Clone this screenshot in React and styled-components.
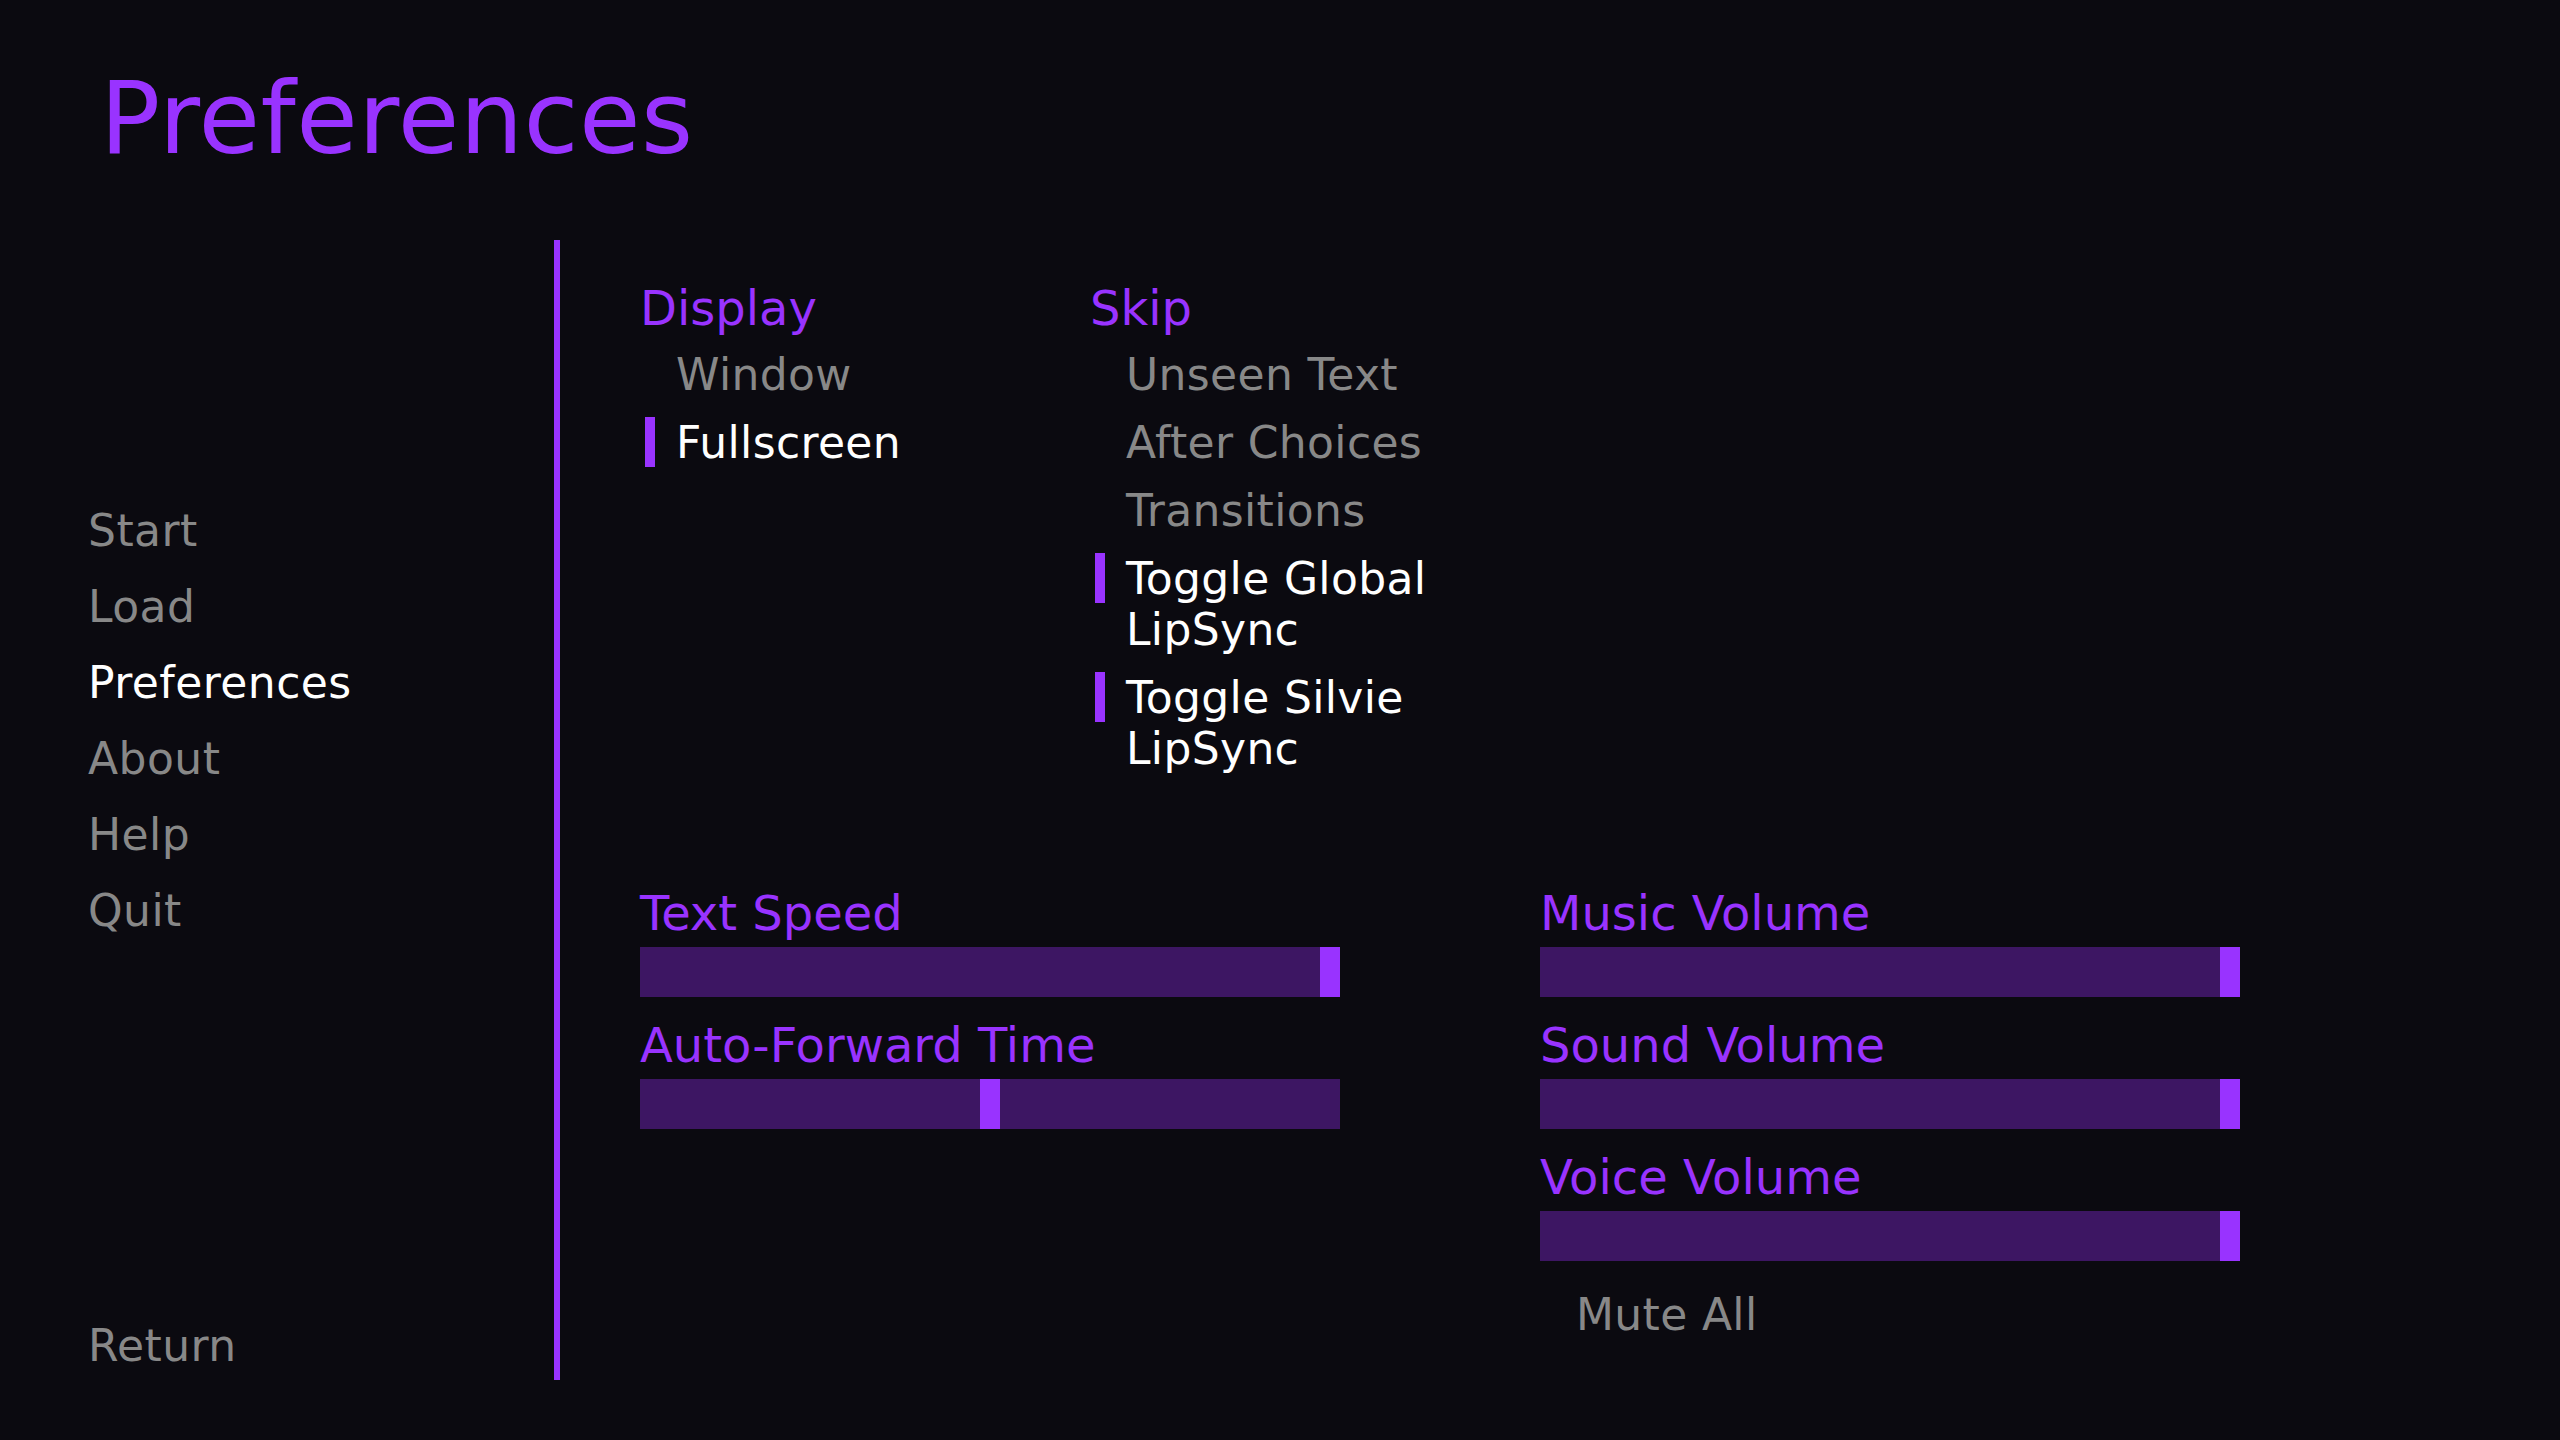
import React from 'react';
import styled, { createGlobalStyle } from 'styled-components';

const ACCENT = '#9933ff';
const MUTED = '#3d1663';
const IDLE = '#888888';

const GlobalStyle = createGlobalStyle`
  html, body {
    margin: 0;
    padding: 0;
    background: #0b0a10;
  }
  body {
    font-family: 'DejaVu Sans', 'Liberation Sans', sans-serif;
  }
`;

const Screen = styled.div`
  width: 2560px;
  height: 1440px;
  display: flex;
  flex-direction: column;
  background: #0b0a10;
  overflow: hidden;
`;

const Header = styled.header`
  height: 240px;
  box-sizing: border-box;
  padding: 61px 0 0 100px;
`;

const Title = styled.h1`
  margin: 0;
  font-size: 100px;
  line-height: 116px;
  font-weight: normal;
  letter-spacing: 0.5px;
  color: ${ACCENT};
`;

const Body = styled.div`
  display: flex;
  height: 1140px;
`;

const Navigation = styled.nav`
  width: 554px;
  box-sizing: border-box;
  padding: 253px 0 4px 88px;
  display: flex;
  flex-direction: column;
`;

const NavButton = styled.div`
  font-size: 44px;
  line-height: 76px;
  height: 76px;
  letter-spacing: 0.45px;
  color: ${(p) => (p.$selected ? '#ffffff' : IDLE)};
`;

const ReturnButton = styled(NavButton)`
  margin-top: auto;
  line-height: 60px;
  height: 60px;
`;

const Divider = styled.div`
  width: 6px;
  background: ${ACCENT};
`;

const Content = styled.main`
  flex: 1;
  box-sizing: border-box;
  padding: 40px 0 0 80px;
  display: flex;
  flex-direction: column;
`;

const Toggles = styled.div`
  display: flex;
`;

const ToggleGroup = styled.div`
  width: 450px;
  display: flex;
  flex-direction: column;
`;

const Label = styled.div`
  font-size: 48px;
  line-height: 56px;
  height: 56px;
  color: ${ACCENT};
  margin-bottom: ${(p) => p.$gap || 5}px;
`;

const CheckButton = styled.div`
  position: relative;
  box-sizing: border-box;
  padding: 8px 0 9px 36px;
  font-size: 44px;
  line-height: 51px;
  letter-spacing: 0.35px;
  max-width: 380px;
  color: ${(p) => (p.$selected ? '#ffffff' : IDLE)};

  &::before {
    content: '';
    display: ${(p) => (p.$selected ? 'block' : 'none')};
    position: absolute;
    left: 5px;
    top: 8px;
    width: 10px;
    height: 50px;
    background: ${ACCENT};
  }
`;

const Sliders = styled.div`
  margin-top: 102px;
  display: grid;
  grid-template-columns: 700px 700px;
  column-gap: 200px;
  align-items: start;
`;

const SliderColumn = styled.div`
  display: flex;
  flex-direction: column;
`;

const SliderGroup = styled.div`
  margin-bottom: 20px;
`;

const Bar = styled.div`
  position: relative;
  height: 50px;
  background: ${MUTED};
`;

const Thumb = styled.div`
  position: absolute;
  top: 0;
  width: 20px;
  height: 50px;
  background: ${ACCENT};
`;

const Slider = ({ label, value }) => (
  <SliderGroup>
    <Label $gap={6}>{label}</Label>
    <Bar>
      <Thumb style={{ left: `${value * 680}px` }} />
    </Bar>
  </SliderGroup>
);

const navItems = ['Start', 'Load', 'Preferences', 'About', 'Help', 'Quit'];

const App = () => (
  <>
    <GlobalStyle />
    <Screen>
      <Header>
        <Title>Preferences</Title>
      </Header>
      <Body>
        <Navigation>
          {navItems.map((item) => (
            <NavButton key={item} $selected={item === 'Preferences'}>
              {item}
            </NavButton>
          ))}
          <ReturnButton>Return</ReturnButton>
        </Navigation>
        <Divider />
        <Content>
          <Toggles>
            <ToggleGroup>
              <Label>Display</Label>
              <CheckButton>Window</CheckButton>
              <CheckButton $selected>Fullscreen</CheckButton>
            </ToggleGroup>
            <ToggleGroup>
              <Label>Skip</Label>
              <CheckButton>Unseen Text</CheckButton>
              <CheckButton>After Choices</CheckButton>
              <CheckButton>Transitions</CheckButton>
              <CheckButton $selected>Toggle Global LipSync</CheckButton>
              <CheckButton $selected>Toggle Silvie LipSync</CheckButton>
            </ToggleGroup>
          </Toggles>
          <Sliders>
            <SliderColumn>
              <Slider label="Text Speed" value={1} />
              <Slider label="Auto-Forward Time" value={0.5} />
            </SliderColumn>
            <SliderColumn>
              <Slider label="Music Volume" value={1} />
              <Slider label="Sound Volume" value={1} />
              <Slider label="Voice Volume" value={1} />
              <CheckButton>Mute All</CheckButton>
            </SliderColumn>
          </Sliders>
        </Content>
      </Body>
    </Screen>
  </>
);

export default App;
